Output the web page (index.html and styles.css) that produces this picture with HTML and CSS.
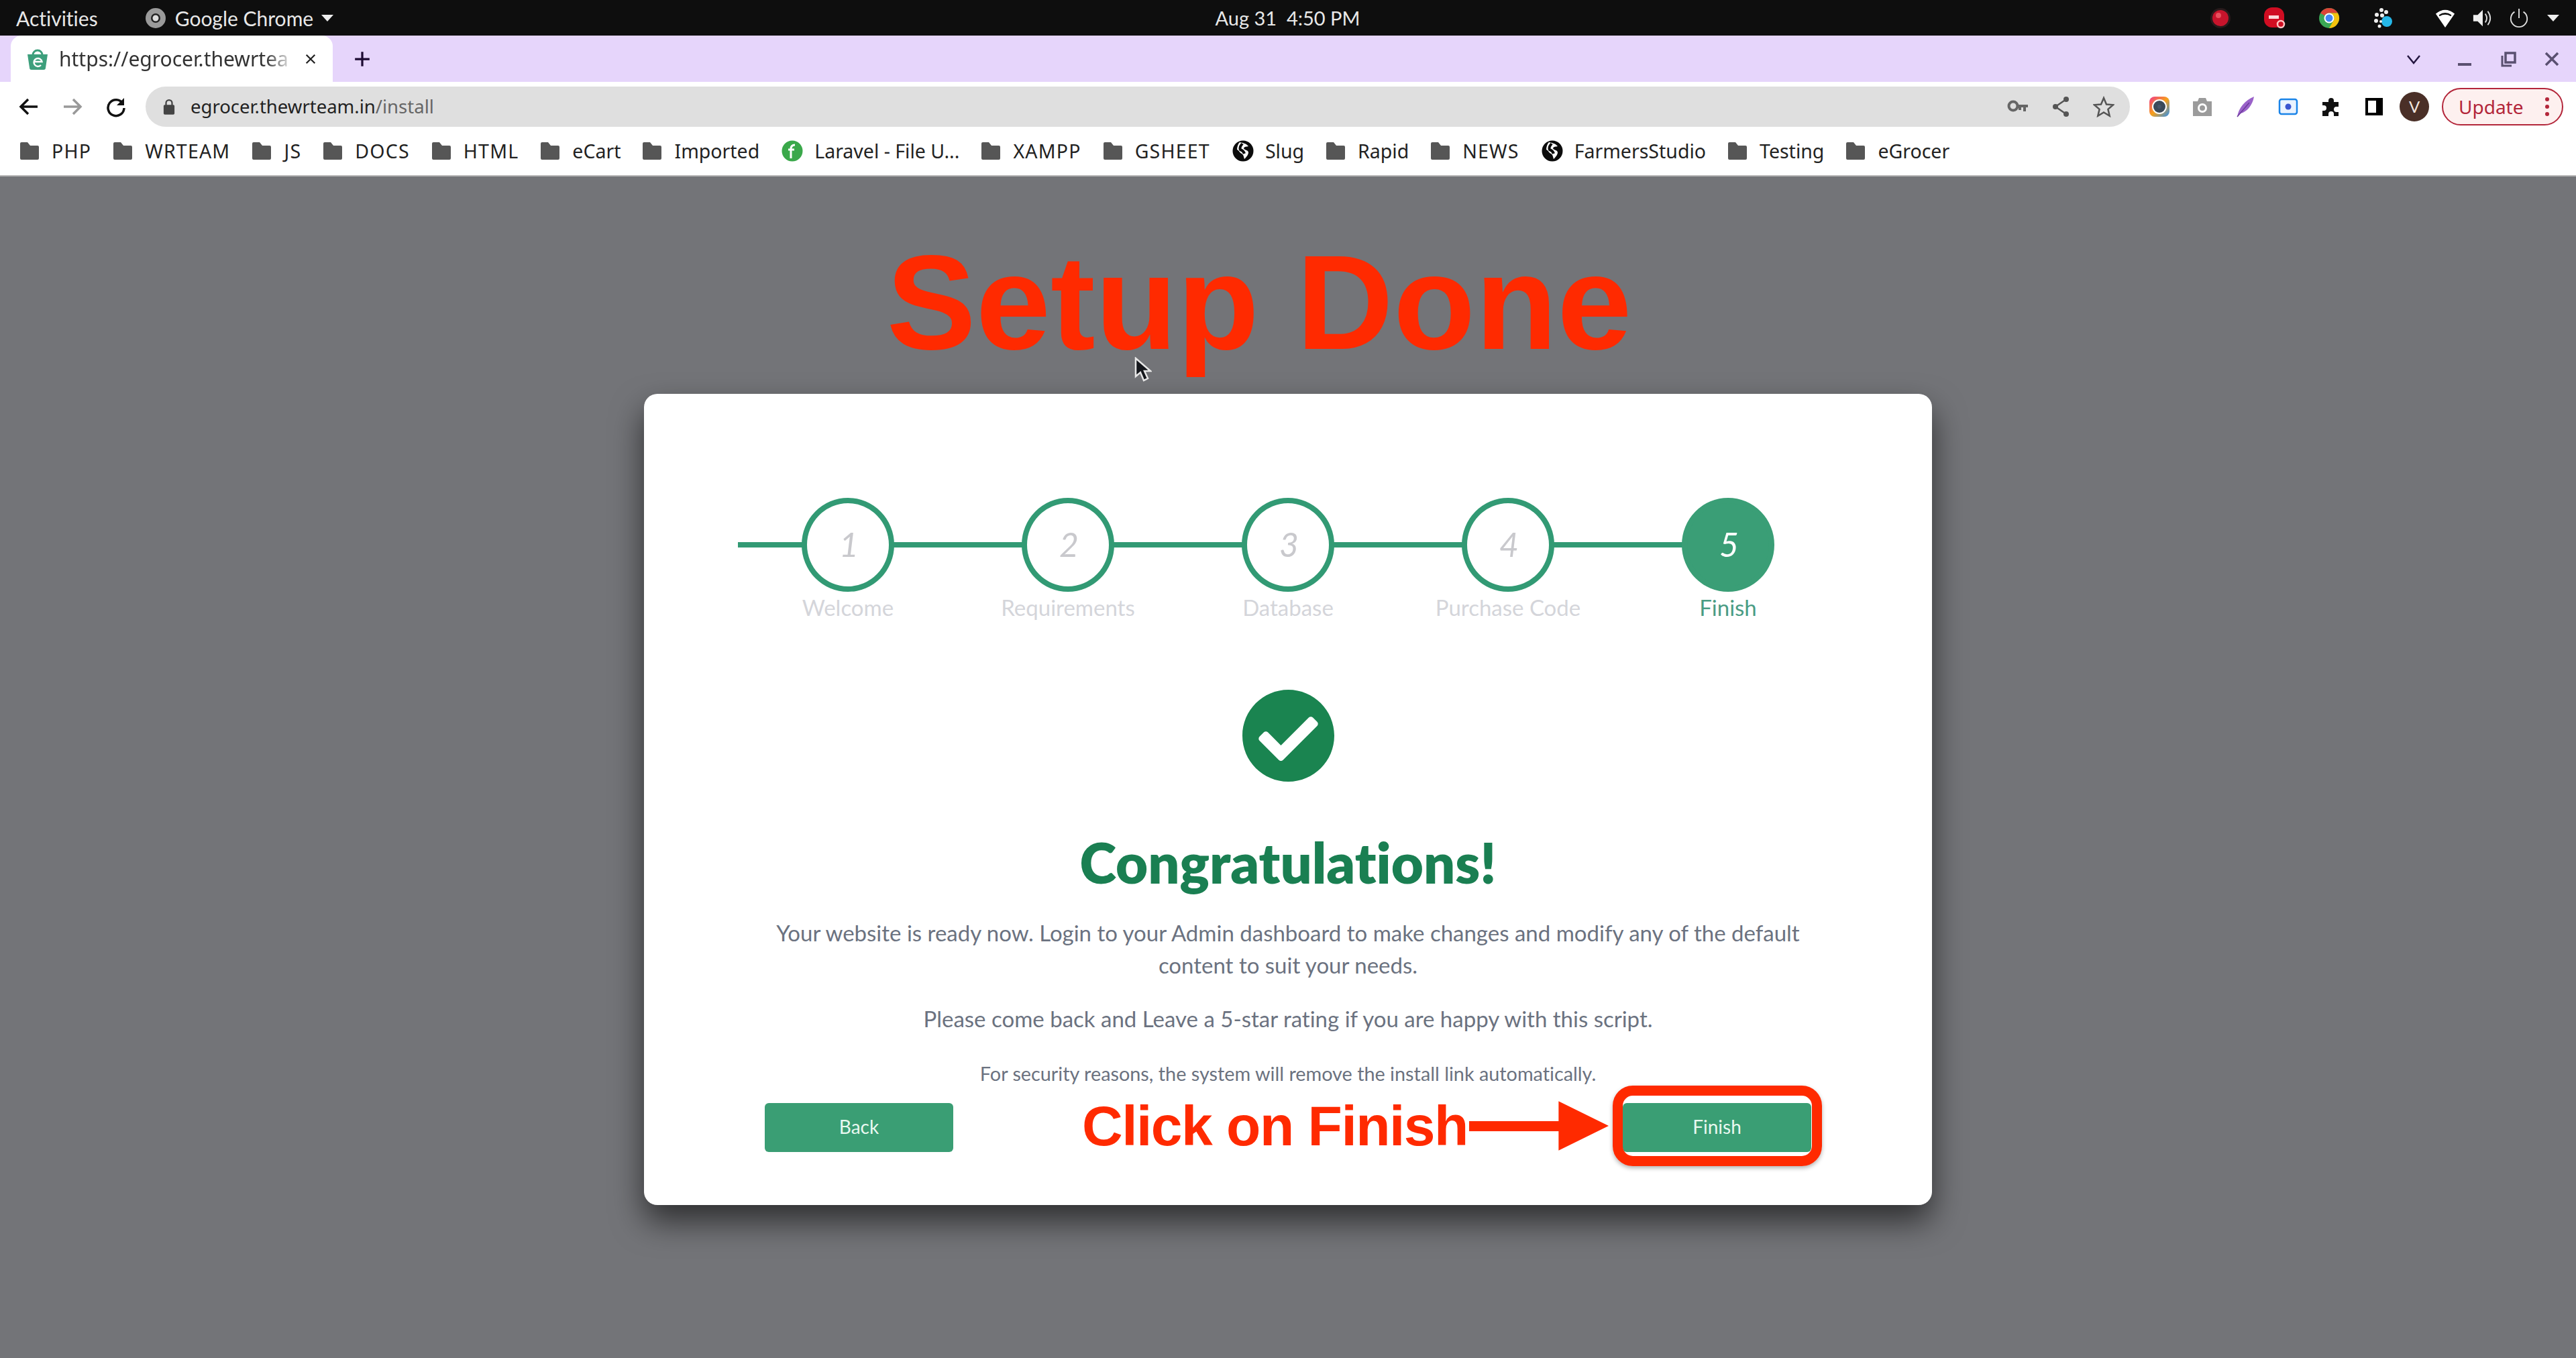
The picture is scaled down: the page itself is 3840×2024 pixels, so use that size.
FILE: index.html
```html
<!DOCTYPE html>
<html lang="en">
<head>
    <meta charset="UTF-8">
    <title>eGrocer - Install</title>
    <link rel="stylesheet" href="styles.css">
</head>
<body>
    <!-- desktop top bar -->
    <div class="topbar">
        <div class="topbar-left">
            <span class="activities">Activities</span>
            <svg class="chrome-mono" viewBox="0 0 32 32"><circle cx="16" cy="16" r="15" fill="#9a9a9a"/><circle cx="16" cy="16" r="7" fill="#222"/><circle cx="16" cy="16" r="4.5" fill="#ddd"/></svg>
            <span class="appname">Google Chrome</span>
            <span class="caret"></span>
        </div>
        <div class="clock">Aug 31&nbsp;&nbsp;4:50 PM</div>
        <div class="topbar-right">
            <div class="tray-apps">
                <svg class="tray-icon" viewBox="0 0 32 32"><circle cx="16" cy="16" r="15" fill="#2a1a1c"/><circle cx="16" cy="16" r="12" fill="#c8142c"/><circle cx="13" cy="12" r="4" fill="#e8505f"/></svg>
                <svg class="tray-icon" viewBox="0 0 32 32"><rect width="30" height="30" rx="12" fill="#d00d22"/><rect x="7" y="12" width="15" height="5" fill="#fbd9d9"/><circle cx="25" cy="25" r="5" fill="#d00d22" stroke="#ffc4c4" stroke-width="2.5"/></svg>
                <svg class="tray-icon" viewBox="0 0 32 32"><circle cx="16" cy="16" r="15" fill="#3aa655"/><path d="M16 1a15 15 0 0 1 13 7.500H16a7.500 7.500 0 0 0-6.500 3.700L3 8.500A15 15 0 0 1 16 1z" fill="#db4437"/><path d="M29 8.500A15 15 0 0 1 16 31l6.500-11.300A7.500 7.500 0 0 0 16 8.500z" fill="#f4c20d"/><circle cx="16" cy="16" r="7.500" fill="#fff"/><circle cx="16" cy="16" r="5.500" fill="#4285f4"/></svg>
                <svg class="tray-icon" viewBox="0 0 32 32"><circle cx="21" cy="21" r="8" fill="#25b7e8"/><circle cx="13" cy="4" r="3" fill="#eee"/><circle cx="20" cy="7" r="3" fill="#eee"/><circle cx="6" cy="11" r="3" fill="#eee"/><circle cx="14" cy="12" r="3" fill="#eee"/><circle cx="5" cy="20" r="3" fill="#eee"/><circle cx="12" cy="21" r="2" fill="#eee"/><circle cx="10" cy="28" r="2.500" fill="#eee"/></svg>
            </div>
            <div class="tray-status">
                <svg class="status-icon" viewBox="0 0 32 32"><path d="M1 9Q16-3 31 9L16 31z" fill="#fff"/><path d="M6 11Q16 4 26 11L25 13Q16 8 7 13z" fill="#111"/></svg>
                <svg class="status-icon" viewBox="0 0 32 32"><path d="M2 11h7l8-8v26l-8-8H2z" fill="#eee"/><path d="M21 9q5 7 0 14M25 5q8 11 0 22" fill="none" stroke="#ddd" stroke-width="2"/></svg>
                <svg class="status-icon" viewBox="0 0 32 32"><path d="M9 6A13 13 0 1 0 23 6" fill="none" stroke="#ddd" stroke-width="2"/><path d="M16 1v15" stroke="#ddd" stroke-width="2"/></svg>
                <span class="caret caret-tray"></span>
            </div>
        </div>
    </div>

    <!-- chrome tab strip -->
    <div class="tabstrip">
        <div class="tab">
            <svg class="favicon" viewBox="0 0 32 32"><path d="M9 10a7 7 0 0 1 14 0" fill="none" stroke="#3d9f7c" stroke-width="3"/><path d="M1 9h30l-3 20a3 3 0 0 1-3 3H7a3 3 0 0 1-3-3z" fill="#3d9f7c"/><path d="M21 25a6 6 0 1 1 1.500-5H11" fill="none" stroke="#fff" stroke-width="2.500"/></svg>
            <span class="tab-title">https://egrocer.thewrtea</span>
            <svg class="tab-close" viewBox="0 0 20 20"><path d="M3 3l14 14M17 3L3 17" stroke="#222" stroke-width="2.500"/></svg>
        </div>
        <svg class="tab-new" viewBox="0 0 24 24"><path d="M12 2v20M2 12h20" stroke="#1d0b33" stroke-width="3"/></svg>
        <div class="window-btns">
            <svg class="win-chevron" viewBox="0 0 24 24"><path d="M3 7l9 11 9-11" fill="none" stroke="#241640" stroke-width="2.500"/></svg>
            <svg class="win-btn" viewBox="0 0 24 24"><path d="M2 20h20" stroke="#5a5070" stroke-width="4"/></svg>
            <svg class="win-btn" viewBox="0 0 24 24"><path d="M8 3h14v14H8z" fill="none" stroke="#5a5070" stroke-width="3.500"/><path d="M3 7v15h14" fill="none" stroke="#5a5070" stroke-width="3"/></svg>
            <svg class="win-btn" viewBox="0 0 24 24"><path d="M3 3l18 18M21 3L3 21" stroke="#5a5070" stroke-width="3.500"/></svg>
        </div>
    </div>

    <!-- toolbar -->
    <div class="toolbar">
        <div class="nav-btns">
            <svg class="nav-icon" viewBox="0 0 32 32"><path d="M29 16H5M15 5L4 16l11 11" fill="none" stroke="#111" stroke-width="3.500"/></svg>
            <svg class="nav-icon" viewBox="0 0 32 32"><path d="M3 16h24M17 5l11 11-11 11" fill="none" stroke="#999" stroke-width="3.500"/></svg>
            <svg class="nav-icon" viewBox="0 0 32 32"><path d="M26 11A12 12 0 1 0 28 18" fill="none" stroke="#111" stroke-width="3.500"/><path d="M28 3v11H17z" fill="#111"/></svg>
        </div>
        <div class="omnibox">
            <svg class="lock" viewBox="0 0 20 26"><path d="M5 12V7a5 5 0 0 1 10 0v5" fill="none" stroke="#444" stroke-width="2.500"/><rect x="1" y="10" width="18" height="16" rx="2" fill="#444"/></svg>
            <span class="url">egrocer.thewrteam.in<span class="url-path">/install</span></span>
            <div class="omni-actions">
                <svg class="omni-icon" viewBox="0 0 32 32"><circle cx="9" cy="15" r="6.500" fill="none" stroke="#666" stroke-width="4"/><path d="M15 13h16v4h-3v6h-4v-6h-3v4h-4v-4h-2z" fill="#666"/></svg>
                <svg class="omni-icon" viewBox="0 0 32 32"><path d="M24 5L8 16l16 11" fill="none" stroke="#555" stroke-width="2.500"/><circle cx="24" cy="5" r="4" fill="#555"/><circle cx="8" cy="16" r="4" fill="#555"/><circle cx="24" cy="27" r="4" fill="#555"/></svg>
                <svg class="omni-icon" viewBox="0 0 32 32"><path d="M16 3l4 9.500 10 .8-7.600 6.600 2.300 9.800L16 24.500l-8.700 5.200 2.300-9.800L2 13.300l10-.8z" fill="none" stroke="#555" stroke-width="2.500"/></svg>
            </div>
        </div>
        <div class="extensions">
            <svg class="ext-icon" viewBox="0 0 32 32"><defs><linearGradient id="wheel" x1="0" y1="0" x2="1" y2="1"><stop offset="0" stop-color="#f0388a"/><stop offset=".5" stop-color="#f7a11a"/><stop offset="1" stop-color="#2a8ff0"/></linearGradient></defs><rect x="1" y="1" width="30" height="30" rx="8" fill="url(#wheel)"/><circle cx="16" cy="16" r="11" fill="#fff"/><circle cx="16" cy="16" r="9" fill="#3a4a5a"/><circle cx="16" cy="16" r="3" fill="#46566a"/></svg>
            <svg class="ext-icon" viewBox="0 0 32 32"><path d="M2 8h7l2-5h10l2 5h7v22H2z" fill="#9b9b9b"/><circle cx="16" cy="18" r="7" fill="#fff"/><circle cx="16" cy="18" r="4" fill="#9b9b9b"/></svg>
            <svg class="ext-icon" viewBox="0 0 32 32"><path d="M4 31C6 18 16 6 29 1 27 14 18 24 9 26z" fill="#9a62c9"/><path d="M4 31L22 10" stroke="#6b3a9a" stroke-width="1.500"/></svg>
            <svg class="ext-icon" viewBox="0 0 32 32"><rect x="3" y="5" width="26" height="22" rx="3" fill="#eaf3ff" stroke="#1a84e8" stroke-width="2.500"/><circle cx="16" cy="16" r="4.500" fill="#3a55d0"/></svg>
            <svg class="ext-icon" viewBox="0 0 32 32"><path d="M12 7a4 4 0 0 1 8 0v2h7v7h-3a4 4 0 0 0 0 8h3v6H20v-3a4 4 0 0 0-8 0v3H3V22h2a4 4 0 0 0 0-8H3V9h9z" fill="#111"/></svg>
            <svg class="ext-icon" viewBox="0 0 32 32"><rect x="3" y="3" width="26" height="26" fill="#000"/><rect x="7" y="7" width="12" height="18" fill="#fff"/></svg>
            <div class="avatar">V</div>
        </div>
        <div class="update">
            <span>Update</span>
            <span class="update-dots"></span>
        </div>
    </div>

    <!-- bookmarks -->
    <div class="bookmarks">
        <div class="bookmark caps"><svg class="folder"><use href="#folder"/></svg>PHP</div>
        <div class="bookmark caps"><svg class="folder"><use href="#folder"/></svg>WRTEAM</div>
        <div class="bookmark caps"><svg class="folder"><use href="#folder"/></svg>JS</div>
        <div class="bookmark caps"><svg class="folder"><use href="#folder"/></svg>DOCS</div>
        <div class="bookmark caps"><svg class="folder"><use href="#folder"/></svg>HTML</div>
        <div class="bookmark"><svg class="folder"><use href="#folder"/></svg>eCart</div>
        <div class="bookmark"><svg class="folder"><use href="#folder"/></svg>Imported</div>
        <div class="bookmark"><svg class="site-icon" viewBox="0 0 32 32"><circle cx="16" cy="16" r="15.500" fill="#3aa84a"/><path d="M14 27V13c0-4 2-6 6-6M10 14h9" fill="none" stroke="#fff" stroke-width="3"/></svg>Laravel - File U...</div>
        <div class="bookmark caps"><svg class="folder"><use href="#folder"/></svg>XAMPP</div>
        <div class="bookmark caps"><svg class="folder"><use href="#folder"/></svg>GSHEET</div>
        <div class="bookmark"><svg class="site-icon"><use href="#globe"/></svg>Slug</div>
        <div class="bookmark"><svg class="folder"><use href="#folder"/></svg>Rapid</div>
        <div class="bookmark caps"><svg class="folder"><use href="#folder"/></svg>NEWS</div>
        <div class="bookmark"><svg class="site-icon"><use href="#globe"/></svg>FarmersStudio</div>
        <div class="bookmark"><svg class="folder"><use href="#folder"/></svg>Testing</div>
        <div class="bookmark"><svg class="folder"><use href="#folder"/></svg>eGrocer</div>
    </div>

    <svg class="defs" width="0" height="0">
        <symbol id="folder" viewBox="0 0 28 26"><path d="M2 0h9l4 5h11a2 2 0 0 1 2 2v17a2 2 0 0 1-2 2H2a2 2 0 0 1-2-2V2a2 2 0 0 1 2-2z" fill="#565656"/></symbol>
        <symbol id="globe" viewBox="0 0 32 32"><circle cx="16" cy="16" r="15.500" fill="#0c0c0c"/><path d="M11 3c5 1 10 2 13 6-3 1-6 0-7 3 1 3 6 2 7 6 0 4-4 8-6 10-1-3-1-6-4-8-3-1-4-5-7-6 0-5 2-9 4-11z" fill="#fff"/><path d="M15 5c-2 3-5 5-3 9 3 1 5 3 6 6" fill="none" stroke="#0c0c0c" stroke-width="4"/></symbol>
    </svg>

    <!-- page -->
    <main class="page">
        <h1 class="setup-title">Setup Done</h1>
        <svg class="cursor" viewBox="0 0 26 38"><path d="M2 2v27l7-6 5 12 6-3-5-11h9z" fill="#15171c" stroke="#e8e8e8" stroke-width="2.500"/></svg>

        <section class="card">
            <div class="stepper">
                <div class="step-line"></div>
                <div class="step"><div class="step-num">1</div><div class="step-label">Welcome</div></div>
                <div class="step"><div class="step-num">2</div><div class="step-label">Requirements</div></div>
                <div class="step"><div class="step-num">3</div><div class="step-label">Database</div></div>
                <div class="step"><div class="step-num">4</div><div class="step-label">Purchase Code</div></div>
                <div class="step active"><div class="step-num">5</div><div class="step-label">Finish</div></div>
            </div>

            <svg class="check" viewBox="8 8 496 496"><path d="M504 256c0 136.967-111.033 248-248 248S8 392.967 8 256 119.033 8 256 8s248 111.033 248 248zM227.314 387.314l184-184c6.248-6.248 6.248-16.379 0-22.627l-22.627-22.627c-6.248-6.249-16.379-6.249-22.628 0L216 308.118l-70.059-70.059c-6.248-6.248-16.379-6.248-22.628 0l-22.627 22.627c-6.248 6.248-6.248 16.379 0 22.627l104 104c6.249 6.249 16.379 6.249 22.628.001z" fill="#1a8450"/></svg>
            <h2 class="congrats">Congratulations!</h2>
            <p class="lead">Your website is ready now. Login to your Admin dashboard to make changes and modify any of the default<br>content to suit your needs.</p>
            <p class="lead rating">Please come back and Leave a 5-star rating if you are happy with this script.</p>
            <p class="note">For security reasons, the system will remove the install link automatically.</p>

            <div class="actions">
                <a class="btn">Back</a>
                <a class="btn">Finish</a>
                <!-- red annotation drawn over the screenshot -->
                <div class="callout">
                    <span class="callout-text">Click on Finish</span>
                    <svg class="callout-arrow" viewBox="0 0 210 74"><path d="M0 30h134V0l75 37-75 37V45H0z" fill="#ff2a00"/></svg>
                </div>
                <div class="callout-box"></div>
            </div>
        </section>
    </main>
</body>
</html>
```

FILE: styles.css
```css
* {
    box-sizing: border-box;
}

body {
    margin: 0;
    height: 2024px;
    overflow: hidden;
    background-color: #737478;
    font-family: Lato, "Noto Sans", sans-serif;
    color: #222;
    font-variant-ligatures: none;
}

/* desktop top bar */
.topbar {
    height: 53px;
    background-color: #0e0e0e;
    color: #e8e8e8;
    display: flex;
    align-items: center;
    justify-content: space-between;
    font-size: 30px;
    padding: 0 25px 0 24px;
}

.clock {
    font-size: 29px;
}

.topbar-left, .topbar-right {
    flex: 1;
    display: flex;
    align-items: center;
}

.topbar-right {
    justify-content: flex-end;
}

.chrome-mono {
    width: 32px;
    height: 32px;
    margin-left: 70px;
    margin-right: 13px;
}

.caret {
    width: 0;
    height: 0;
    margin-left: 12px;
    border-left: 9px solid transparent;
    border-right: 9px solid transparent;
    border-top: 10px solid #eee;
}

.caret-tray {
    margin-left: 2px;
}

.tray-apps {
    display: flex;
    gap: 49px;
    margin-right: 61px;
}

.tray-icon {
    width: 32px;
    height: 32px;
}

.tray-status {
    display: flex;
    align-items: center;
    gap: 25px;
}

.status-icon {
    width: 30px;
    height: 30px;
}

/* tab strip */
.tabstrip {
    height: 69px;
    background-color: #e6d5fb;
    display: flex;
    align-items: center;
    padding-left: 16px;
}

.tab {
    width: 480px;
    height: 69px;
    background-color: #fff;
    border-radius: 16px 16px 0 0;
    display: flex;
    align-items: center;
    padding: 0 0 0 24px;
    position: relative;
}

.favicon {
    width: 32px;
    height: 32px;
    flex: none;
}

.tab-title {
    width: 350px;
    margin-left: 16px;
    overflow: hidden;
    white-space: nowrap;
    font-family: "Noto Sans", sans-serif;
    font-size: 30px;
    color: #333;
    -webkit-mask-image: linear-gradient(to right, #000 88%, transparent 100%);
    mask-image: linear-gradient(to right, #000 88%, transparent 100%);
}

.tab-close {
    width: 18px;
    height: 18px;
    margin-left: 16px;
}

.tab-new {
    width: 26px;
    height: 26px;
    margin-left: 31px;
}

.window-btns {
    margin-left: auto;
    display: flex;
    align-items: center;
    gap: 41px;
    padding-right: 24px;
}

.win-chevron {
    width: 24px;
    height: 24px;
    margin-right: 11px;
}

.win-btn {
    width: 24px;
    height: 24px;
}

/* toolbar */
.toolbar {
    height: 73px;
    background-color: #fff;
    display: flex;
    align-items: center;
    padding: 0 19px 0 27px;
}

.nav-btns {
    display: flex;
    gap: 33px;
    width: 190px;
}

.nav-icon {
    width: 32px;
    height: 32px;
}

.omnibox {
    width: 2958px;
    height: 60px;
    background-color: #dfdfdf;
    border-radius: 30px;
    display: flex;
    align-items: center;
    padding: 0 23px 0 26px;
}

.lock {
    width: 18px;
    height: 24px;
    margin-right: 23px;
}

.url {
    font-family: "Noto Sans", sans-serif;
    font-size: 27.5px;
    color: #222;
}

.url-path {
    color: #666;
}

.omni-actions {
    margin-left: auto;
    display: flex;
    gap: 32px;
}

.omni-icon {
    width: 32px;
    height: 32px;
}

.extensions {
    display: flex;
    align-items: center;
    gap: 32px;
    margin-left: 28px;
}

.ext-icon {
    width: 32px;
    height: 32px;
}

.avatar {
    width: 44px;
    height: 44px;
    margin-left: -10px;
    border-radius: 50%;
    background-color: #4a2f27;
    color: #f3e6df;
    font-size: 24px;
    display: flex;
    align-items: center;
    justify-content: center;
}

.update {
    margin-left: auto;
    width: 181px;
    height: 56px;
    border: 2px solid #b3263a;
    border-radius: 28px;
    background-color: #fdf0ef;
    color: #b3263a;
    font-family: "Noto Sans", sans-serif;
    font-size: 28px;
    display: flex;
    align-items: center;
    justify-content: space-between;
    padding: 0 19px 0 23px;
}

.update-dots {
    width: 6px;
    height: 6px;
    border-radius: 50%;
    background-color: #b3263a;
    box-shadow: 0 -11px 0 #b3263a, 0 11px 0 #b3263a;
}

/* bookmarks */
.bookmarks {
    height: 68px;
    background-color: #fff;
    border-bottom: 2px solid #b8b8b8;
    display: flex;
    align-items: center;
    gap: 33px;
    padding: 0 0 6px 30px;
    font-family: "Noto Sans", sans-serif;
    font-size: 28.5px;
    color: #222;
}

.bookmark {
    display: flex;
    align-items: center;
    gap: 19px;
    white-space: nowrap;
}

.caps {
    letter-spacing: 1.200px;
}

.folder {
    width: 28px;
    height: 26px;
}

.site-icon {
    width: 32px;
    height: 32px;
    margin-right: -2px;
}

.defs {
    position: absolute;
}

/* page */
.page {
    height: 1761px;
    position: relative;
    display: flex;
    flex-direction: column;
    align-items: center;
}

.setup-title {
    margin: 68px 86px 0 0;
    height: 256px;
    font-family: "Liberation Sans", Arial, sans-serif;
    font-size: 200px;
    line-height: 240px;
    font-weight: bold;
    color: #ff2a00;
}

.cursor {
    position: absolute;
    left: 1691px;
    top: 269px;
    width: 26px;
    height: 38px;
}

.card {
    width: 1920px;
    height: 1209px;
    background-color: #fff;
    border-radius: 20px;
    box-shadow: 0 24px 48px rgba(0, 0, 0, .6);
    display: flex;
    flex-direction: column;
    align-items: center;
    padding-top: 155px;
}

.stepper {
    width: 1640px;
    height: 190px;
    position: relative;
    display: flex;
}

.step-line {
    position: absolute;
    left: 0;
    top: 66px;
    width: 1476px;
    height: 8px;
    background-color: #329a74;
}

.step {
    flex: none;
    width: 328px;
    position: relative;
    text-align: center;
}

.step-num {
    width: 138px;
    height: 140px;
    margin: 0 auto;
    padding: 0 0 3px 3px;
    border: 8px solid #329a74;
    border-radius: 50%;
    background-color: #fff;
    color: #c9c9cd;
    font-size: 50px;
    font-style: italic;
    display: flex;
    align-items: center;
    justify-content: center;
}

.step-label {
    margin-top: 3px;
    font-size: 33px;
    line-height: 40px;
    color: #d4d5da;
    white-space: nowrap;
}

.step.active .step-num {
    background-color: #3a9e76;
    border-color: #3a9e76;
    color: #fff;
}

.step.active .step-label {
    color: #4a9c84;
}

.check {
    width: 137px;
    height: 137px;
    margin-top: 96px;
}

.congrats {
    margin: 70px 0 0;
    font-size: 83px;
    line-height: 100px;
    font-weight: 800;
    color: #1a7f52;
}

.lead {
    margin: 31px 0 0;
    font-size: 33px;
    line-height: 48px;
    color: #6b7280;
    text-align: center;
}

.rating {
    margin-top: 32px;
}

.note {
    margin: 42px 0 0;
    font-size: 28.800px;
    line-height: 32px;
    color: #6b7280;
}

.actions {
    width: 1560px;
    margin-top: 28px;
    display: flex;
    justify-content: space-between;
    position: relative;
}

.btn {
    width: 281px;
    height: 73px;
    padding-bottom: 3px;
    background-color: #3a9e74;
    border-radius: 6px;
    color: #e8f8f0;
    font-size: 28px;
    display: flex;
    align-items: center;
    justify-content: center;
}

.callout {
    position: absolute;
    left: 473px;
    top: -3px;
    display: flex;
    align-items: center;
    height: 74px;
}

.callout-text {
    font-family: "Liberation Sans", Arial, sans-serif;
    font-size: 84px;
    letter-spacing: -1.500px;
    font-weight: bold;
    color: #ff2a00;
    white-space: nowrap;
    width: 577px;
}

.callout-arrow {
    width: 209px;
    height: 74px;
}

.callout-box {
    position: absolute;
    left: 1264px;
    top: -26px;
    width: 312px;
    height: 120px;
    border: 15px solid #ff2a00;
    border-radius: 30px;
    box-shadow: 0 3px 6px rgba(0, 0, 0, .3);
}
```
